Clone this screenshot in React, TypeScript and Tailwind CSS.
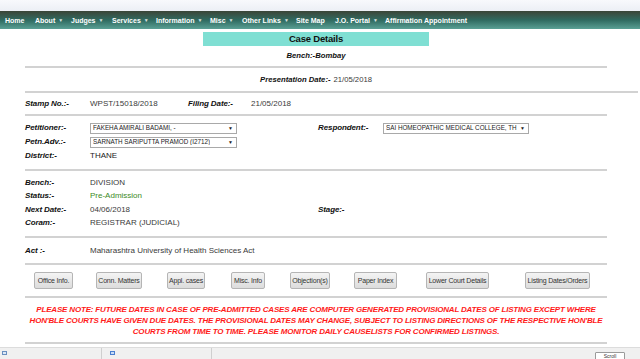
import React from "react";

const NavItem = ({ label, arrow = false, w }: { label: string; arrow?: boolean; w: string }) => (
  <div className={`flex items-center ${w} shrink-0`}>
    <span>{label}</span>
    {arrow && <span className="ml-[3px] text-[5px] leading-none opacity-80">▼</span>}
  </div>
);

const Line = ({ full = false }: { full?: boolean }) => (
  <div className={`h-[2px] bg-[#d2d2d2] ${full ? "w-[613px]" : "w-[582px]"}`} />
);

const Label = ({ children, w = "w-[65px]" }: { children: React.ReactNode; w?: string }) => (
  <div className={`${w} shrink-0 font-bold italic text-[#111] tracking-[-0.1px]`}>{children}</div>
);

const Select = ({ text, w }: { text: string; w: string }) => (
  <div className={`${w} h-[11px] border border-[#a9a9a9] bg-white flex items-center justify-between pl-[2px] pr-[3px] text-[6.3px] leading-none text-[#222]`}>
    <span className="whitespace-nowrap overflow-hidden">{text}</span>
    <span className="text-[5px]">▼</span>
  </div>
);

const Btn = ({ label, w }: { label: string; w: string }) => (
  <div className={`${w} h-[17px] shrink-0 flex items-center justify-center border border-[#b5b5b5] rounded-[2px] bg-gradient-to-b from-[#f4f4f4] to-[#dcdcdc] text-[7px] text-[#333] tracking-[-0.2px] whitespace-nowrap`}>
    {label}
  </div>
);

export default function App() {
  return (
    <div
      className="w-[640px] h-[359px] overflow-hidden bg-white relative text-[8px] leading-none text-[#3a3a3a]"
      style={{ fontFamily: '"Liberation Sans", Arial, sans-serif' }}
    >
      <div className="h-[11px] bg-gradient-to-b from-[#f8f9fc] to-[#eceff5]" />
      <div className="h-[18px] bg-gradient-to-b from-[#3a4538] via-[#2f6a60] to-[#5aa095] flex items-center pl-[5px] text-white font-bold text-[7px] whitespace-nowrap">
        <NavItem label="Home" w="w-[30px]" />
        <NavItem label="About" arrow w="w-[36px]" />
        <NavItem label="Judges" arrow w="w-[41px]" />
        <NavItem label="Services" arrow w="w-[44px]" />
        <NavItem label="Information" arrow w="w-[54px]" />
        <NavItem label="Misc" arrow w="w-[32px]" />
        <NavItem label="Other Links" arrow w="w-[54px]" />
        <NavItem label="Site Map" w="w-[39px]" />
        <NavItem label="J.O. Portal" arrow w="w-[50px]" />
        <NavItem label="Affirmation Appointment" w="w-[90px]" />
      </div>

      <div className="ml-[25px] w-[582px]">
        <div className="mt-[3px] flex justify-center">
          <div className="w-[226px] h-[14px] bg-[#7fdfd3] flex items-center justify-center font-bold text-[9.5px] tracking-[-0.2px] text-[#111]">
            Case Details
          </div>
        </div>
        <div className="h-[20px] flex items-center justify-center font-bold italic text-[#111] text-[7.7px]">Bench:-Bombay</div>
        <Line />
        <div className="h-[23px] flex items-center justify-center text-[7.7px]">
          <span className="font-bold italic text-[#111]">Presentation Date:-</span>
          <span className="ml-[3px]">21/05/2018</span>
        </div>
        <Line full />
        <div className="h-[21px] flex items-center">
          <Label>Stamp No.:-</Label>
          <div className="w-[98px]">WPST/15018/2018</div>
          <Label w="w-[63px]">Filing Date:-</Label>
          <div>21/05/2018</div>
        </div>
        <Line />
        <div className="pt-[5px] pb-[6px] flex flex-col">
          <div className="h-[14px] flex items-center">
            <Label>Petitioner:-</Label>
            <Select text="FAKEHA AMIRALI BADAMI, -" w="w-[147px]" />
            <div className="ml-[81px]">
              <Label>Respondent:-</Label>
            </div>
            <Select text="SAI HOMEOPATHIC MEDICAL COLLEGE, TH" w="w-[146px]" />
          </div>
          <div className="h-[14px] flex items-center">
            <Label>Petn.Adv.:-</Label>
            <Select text="SARNATH SARIPUTTA PRAMOD (I2712)" w="w-[147px]" />
          </div>
          <div className="h-[14px] flex items-center">
            <Label>District:-</Label>
            <div className="text-[#222]">THANE</div>
          </div>
        </div>
        <Line />
        <div className="pt-[5px] pb-[6px] flex flex-col">
          <div className="h-[13.5px] flex items-center">
            <Label>Bench:-</Label>
            <div>DIVISION</div>
          </div>
          <div className="h-[13.5px] flex items-center">
            <Label>Status:-</Label>
            <div className="text-[#3d8a1e]">Pre-Admission</div>
          </div>
          <div className="h-[13.5px] flex items-center">
            <Label>Next Date:-</Label>
            <div className="w-[228px]">04/06/2018</div>
            <Label>Stage:-</Label>
          </div>
          <div className="h-[13.5px] flex items-center">
            <Label>Coram:-</Label>
            <div>REGISTRAR (JUDICIAL)</div>
          </div>
        </div>
        <Line />
        <div className="h-[25px] flex items-center">
          <Label>Act :-</Label>
          <div>Maharashtra University of Health Sciences Act</div>
        </div>
        <Line />
        <div className="h-[31px] flex items-center pl-[9px]">
          <Btn label="Office Info." w="w-[39px]" />
          <div className="w-[23px]" />
          <Btn label="Conn. Matters" w="w-[46px]" />
          <div className="w-[25px]" />
          <Btn label="Appl. cases" w="w-[38px]" />
          <div className="w-[26px]" />
          <Btn label="Misc. Info" w="w-[34px]" />
          <div className="w-[25px]" />
          <Btn label="Objection(s)" w="w-[40px]" />
          <div className="w-[24px]" />
          <Btn label="Paper Index" w="w-[43px]" />
          <div className="w-[29px]" />
          <Btn label="Lower Court Details" w="w-[63px]" />
          <div className="w-[36px]" />
          <Btn label="Listing Dates/Orders" w="w-[65px]" />
        </div>
        <Line />
        <div className="pt-[6px] pb-[5px] text-center font-bold italic text-[#ff1a1a] text-[8px] tracking-[-0.18px] leading-[11px]">
          PLEASE NOTE: FUTURE DATES IN CASE OF PRE-ADMITTED CASES ARE COMPUTER GENERATED PROVISIONAL DATES OF LISTING EXCEPT WHERE HON'BLE COURTS HAVE GIVEN DUE DATES. THE PROVISIONAL DATES MAY CHANGE, SUBJECT TO LISTING DIRECTIONS OF THE RESPECTIVE HON'BLE COURTS FROM TIME TO TIME. PLEASE MONITOR DAILY CAUSELISTS FOR CONFIRMED LISTINGS.
        </div>
        <Line />
      </div>

      <div className="absolute left-0 right-0 top-[347px] h-[12px] bg-[#f0f0f0] border-t border-[#dcdcdc] flex">
        <div className="w-[102px] border-r border-[#cfcfcf] pl-[2px] pt-[3px]">
          <div className="w-[5px] h-[4px] border border-[#6a8fc0] bg-[#dde8f5]" />
        </div>
        <div className="w-[110px] border-r border-[#cfcfcf] pl-[8px] pt-[3px]">
          <div className="w-[5px] h-[4px] border border-[#4a7fd0] bg-[#c8dcf5]" />
        </div>
        <div className="flex-1" />
        <div className="mr-[15px] mt-[4px] w-[30px] h-[10px] border border-[#9a9a9a] bg-white rounded-[1px] text-[5px] text-[#333] flex items-start justify-center pt-[1px]">
          Scroll
        </div>
      </div>
    </div>
  );
}
